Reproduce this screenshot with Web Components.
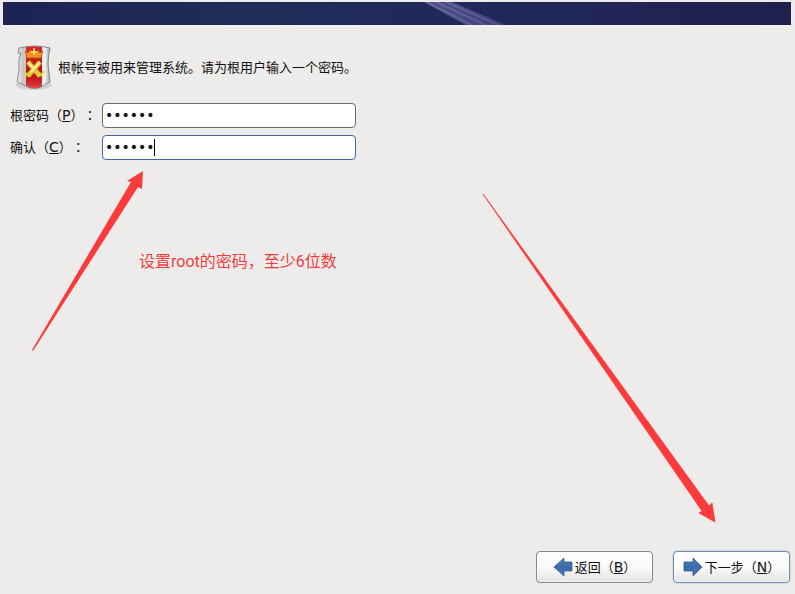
<!DOCTYPE html>
<html lang="zh-CN">
<head>
<meta charset="UTF-8">
<meta name="viewport" content="width=device-width, initial-scale=1">
<title>根密码</title>
<style>
    body {
        margin: 0;
        background: #edeceb;
        color: #111;
        font: 13px/20px "DejaVu Sans", "Noto Sans CJK SC", sans-serif;
        text-spacing-trim: space-all;
    }
</style>
</head>
<body>
<root-password-page></root-password-page>

<script>
// Decorative strip along the top of the installer
class InstallerBanner extends HTMLElement {
    constructor() {
        super();
        this.attachShadow({ mode: 'open' });
        this.shadowRoot.innerHTML = `
            <style>
                :host {
                    display: flex;
                    justify-content: center;
                    height: 23px;
                    overflow: hidden;
                    background: linear-gradient(90deg, #1c2352, #1f2d58 30%, #20295a 60%, #20204e);
                    box-shadow: 0 2px #f3f1f8;
                }
                svg { flex: none; }
            </style>
            <svg width="256" height="23" viewBox="-129 0 256 23" aria-hidden="true">
                <defs>
                    <linearGradient id="beam" x1="0" y1="0" x2="1" y2="0">
                        <stop offset="0" stop-color="#777ab0"/>
                        <stop offset="1" stop-color="#50488a"/>
                    </linearGradient>
                </defs>
                <path d="M26 0H54L108 23H68Z" fill="url(#beam)" opacity=".65"/>
                <path d="M28 0L74 23M38 0L88 23M48 0L100 23" stroke="#8886bd" stroke-width="1.3" opacity=".4"/>
                <path d="M33 0L80 23M43 0L94 23" stroke="#353469" stroke-width="1" opacity=".4"/>
            </svg>
        `;
    }
}

// Shield with a crown and crossed batons
class RootBadge extends HTMLElement {
    constructor() {
        super();
        this.attachShadow({ mode: 'open' });
        this.shadowRoot.innerHTML = `
            <style>
                :host { display: block; flex: none; }
                svg { display: block; }
            </style>
            <svg width="40" height="48" viewBox="0 0 40 48" aria-hidden="true">
                <defs>
                    <linearGradient id="silver">
                        <stop offset="0" stop-color="#f8f8f8"/>
                        <stop offset=".2" stop-color="#c5c5c9"/>
                        <stop offset=".8" stop-color="#f3f3f4"/>
                        <stop offset="1" stop-color="#898b8e"/>
                    </linearGradient>
                    <linearGradient id="red" x1="0" y1="0" x2="0" y2="1">
                        <stop offset="0" stop-color="#dc2625"/>
                        <stop offset=".65" stop-color="#b50e13"/>
                        <stop offset="1" stop-color="#f04e46"/>
                    </linearGradient>
                    <clipPath id="shield">
                        <path d="M5 4Q21 0 36 4Q34 12 34 20L36 38Q31 40 29 42Q20 47 12 42Q8 40 3 38Q6 26 5 15Z"/>
                    </clipPath>
                </defs>
                <ellipse cx="20" cy="41" rx="18" ry="5" fill="#aaa" opacity=".4"/>
                <g clip-path="url(#shield)">
                    <path d="M2 1H38V47H2Z" fill="url(#silver)"/>
                    <path d="M12 2H28V47H12Z" fill="url(#red)"/>
                </g>
                <path d="M5 4Q21 0 36 4Q34 12 34 20L36 38Q31 40 29 42Q20 47 12 42Q8 40 3 38Q6 26 5 15L7 9H4Z" fill="none" stroke="#898989" stroke-width="1"/>
                <path d="M11 7L14 9L16 6L20 8L24 6L26 9L29 7L27 14H13Z" fill="#f2951e" stroke="#c34c13" stroke-width=".7"/>
                <path d="M20 4V11M17 8H23" stroke="#ffe77c" stroke-width="1.6"/>
                <path d="M14 18L26 32M26 18L14 32" stroke="#9e5812" stroke-width="6"/>
                <path d="M14 18L26 32M26 18L14 32" stroke="#f0bc3b" stroke-width="4.5"/>
                <path d="M14 18L20 25M26 18L17 28" stroke="#fff19a" stroke-width="2"/>
                <path d="M10 27Q12 31 16 32M30 27Q28 31 24 32M11 33L16 29M29 33L24 29" fill="none" stroke="#dfcf3c" stroke-width="2"/>
            </svg>
        `;
    }
}

class PasswordField extends HTMLElement {
    constructor() {
        super();
        this.attachShadow({ mode: 'open' });
    }

    connectedCallback() {
        const value = this.getAttribute('value') || '';
        const key = this.getAttribute('key');

        this.shadowRoot.innerHTML = `
            <style>
                :host {
                    display: grid;
                    grid-template-columns: 92px minmax(0, 254px);
                    align-items: center;
                }
                label { white-space: nowrap; }
                u { font-size: 14px; }
                .colon { font-family: "Noto Sans CJK JP", sans-serif; }
                .entry { position: relative; display: block; }
                input {
                    display: block;
                    box-sizing: border-box;
                    width: 100%;
                    height: 25px;
                    padding: 0 2px 2px;
                    border: 1px solid #6c6968;
                    border-radius: 4px;
                    outline: none;
                    background: #fff;
                    color: #111;
                    font: 14px "DejaVu Sans", sans-serif;
                    caret-color: transparent;
                }
                :host([active]) input { border-color: #46679d; }
                .caret {
                    display: none;
                    position: absolute;
                    left: 52px;
                    top: 4px;
                    bottom: 4px;
                    width: 1px;
                    background: #000;
                }
                :host([active]) .caret { display: block; }
            </style>
            <label for="pw"><slot></slot>（<u>${key}</u>）<span class="colon" lang="ja">：</span></label>
            <span class="entry">
                <input id="pw" type="password" value="${value}" accesskey="${key}">
                <span class="caret"></span>
            </span>
        `;
    }
}

class NavButton extends HTMLElement {
    constructor() {
        super();
        this.attachShadow({ mode: 'open' });
    }

    connectedCallback() {
        const key = this.getAttribute('key');
        const shape = this.getAttribute('direction') === 'back'
            ? 'M1 10L11 1V5H19V14H11V19Z'
            : 'M19 10L10 1V5H1V14H10V19Z';

        this.shadowRoot.innerHTML = `
            <style>
                :host { display: block; }
                button {
                    display: flex;
                    align-items: center;
                    justify-content: center;
                    gap: 2px;
                    box-sizing: border-box;
                    width: 117px;
                    height: 32px;
                    padding: 0;
                    border: 1px solid #898786;
                    border-radius: 4px;
                    background: linear-gradient(#fff, #f9f9f8 50%, #e5e4e2);
                    box-shadow: inset 0 0 0 1px #fff8;
                    color: inherit;
                    font: inherit;
                    white-space: nowrap;
                    text-spacing-trim: inherit;
                }
                :host([primary]) button {
                    border-color: #758ba9;
                    box-shadow: 0 0 1px 1px #cddcec, inset 0 0 0 1px #fff8;
                }
                svg { flex: none; }
                u { font-size: 14px; }
            </style>
            <button type="button" accesskey="${key}">
                <svg width="20" height="20" viewBox="0 0 20 20" aria-hidden="true">
                    <defs>
                        <linearGradient id="blue" x1="0" y1="0" x2="0" y2="1">
                            <stop offset="0" stop-color="#5485bd"/>
                            <stop offset=".5" stop-color="#386ba8"/>
                            <stop offset="1" stop-color="#4d83bd"/>
                        </linearGradient>
                    </defs>
                    <path d="${shape}" fill="url(#blue)" stroke="#244f83" stroke-width=".7" stroke-linejoin="round"/>
                </svg>
                <span><slot></slot>（<u>${key}</u>）</span>
            </button>
        `;
    }
}

// Red notes and arrows laid over the page
class GuideNotes extends HTMLElement {
    constructor() {
        super();
        this.attachShadow({ mode: 'open' });
        this.shadowRoot.innerHTML = `
            <style>
                :host {
                    position: absolute;
                    inset: 0;
                    overflow: hidden;
                    pointer-events: none;
                    color: #f23c3c;
                    font: 16px/24px Roboto, "Noto Sans CJK SC", sans-serif;
                }
                svg { position: absolute; left: 0; top: 0; overflow: visible; }
                .note { position: absolute; left: 139px; top: 250px; white-space: nowrap; }
            </style>
            <svg width="720" height="530" fill="#fb3b3b" aria-hidden="true">
                <path d="M32 350L131 182L127 181L143 171L142 189L138 187L33 351Z"/>
                <path d="M483 194L702 511L699 513L715 522L712 503L709 506Z" stroke="#fb3b3b" stroke-width=".8"/>
            </svg>
            <span class="note"><slot></slot></span>
        `;
    }
}

class RootPasswordPage extends HTMLElement {
    constructor() {
        super();
        this.attachShadow({ mode: 'open' });
        this.shadowRoot.innerHTML = `
            <style>
                :host {
                    position: relative;
                    display: flex;
                    flex-direction: column;
                    box-sizing: border-box;
                    min-height: 100vh;
                }
                installer-banner { margin: 2px 4px 0 3px; }
                main {
                    flex: 1;
                    display: flex;
                    flex-direction: column;
                    gap: 11px;
                    padding: 19px 10px;
                }
                .intro { display: flex; align-items: center; gap: 4px; padding-left: 4px; }
                p { margin: 0; }
                form { display: grid; gap: 7px; }
                footer {
                    display: flex;
                    justify-content: flex-end;
                    gap: 20px;
                    padding: 0 5px 11px;
                }
            </style>
            <installer-banner></installer-banner>
            <main>
                <div class="intro">
                    <root-badge></root-badge>
                    <p>根帐号被用来管理系统。请为根用户输入一个密码。</p>
                </div>
                <form>
                    <password-field key="P" value="123456">根密码</password-field>
                    <password-field key="C" value="123456" active>确认</password-field>
                </form>
            </main>
            <footer>
                <nav-button key="B" direction="back">返回</nav-button>
                <nav-button key="N" direction="next" primary>下一步</nav-button>
            </footer>
            <guide-notes>设置root的密码，至少6位数</guide-notes>
        `;
    }
}

customElements.define('installer-banner', InstallerBanner);
customElements.define('root-badge', RootBadge);
customElements.define('password-field', PasswordField);
customElements.define('nav-button', NavButton);
customElements.define('guide-notes', GuideNotes);
customElements.define('root-password-page', RootPasswordPage);
</script>
</body>
</html>
